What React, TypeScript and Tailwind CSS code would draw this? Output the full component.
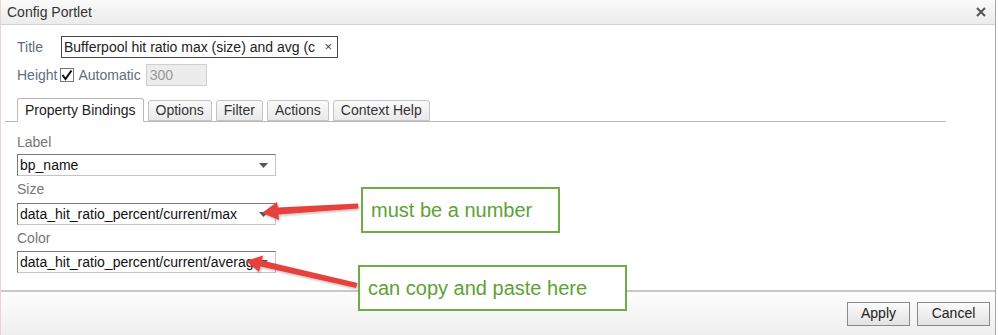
import React from "react";

const font = { fontFamily: '"Liberation Sans", Arial, sans-serif' };

function Select({ value }: { value: string }) {
  return (
    <div className="relative flex h-[22px] w-[259px] items-center overflow-hidden border border-[#c4c4c4] border-t-[#7a7a7a] border-l-[#7a7a7a] bg-white pl-[2px] text-[14px] text-[#111]">
      <span className="whitespace-nowrap">{value}</span>
      <span className="absolute right-0 top-0 flex h-full w-[16px] items-center justify-start bg-white">
        <svg width="9" height="5" viewBox="0 0 9 5">
          <path d="M0 0 L9 0 L4.5 5 Z" fill="#555" />
        </svg>
      </span>
    </div>
  );
}

function Tab({ label, active }: { label: string; active?: boolean }) {
  return (
    <div
      className={
        active
          ? "-mb-px flex h-[24px] items-center rounded-t-[3px] border border-b-white border-[#b8b8b8] bg-white px-[7px] text-[14px] text-[#222]"
          : "flex h-[21px] items-center rounded-t-[3px] border border-[#c4c4c4] bg-gradient-to-b from-[#fafafa] to-[#e9e9e9] px-[7px] text-[14px] text-[#333]"
      }
    >
      {label}
    </div>
  );
}

function Callout({ text, className }: { text: string; className: string }) {
  return (
    <div
      className={`absolute flex items-center border-2 border-[#6fac46] bg-white pl-[8px] text-[20px] text-[#5da234] ${className}`}
    >
      {text}
    </div>
  );
}

export default function App() {
  return (
    <div className="relative h-[335px] w-[998px] overflow-hidden bg-white" style={font}>
      <div className="flex h-[335px] w-[996px] flex-col border-l border-r border-l-[#e8d4d4] border-r-[#a8a8a8]">
        {/* header */}
        <div className="flex h-[25px] shrink-0 items-center justify-between border-b border-[#d2d2d2] bg-gradient-to-b from-[#fafafa] to-[#ececec] pl-[6px] pr-[9px]">
          <span className="text-[14px] text-[#333]">Config Portlet</span>
          <svg width="10" height="10" viewBox="0 0 10 10">
            <path d="M1 1 L9 9 M9 1 L1 9" stroke="#555" strokeWidth="2" />
          </svg>
        </div>

        {/* body */}
        <div className="flex-1">
          <div className="flex items-center pl-[16px] pt-[11px]">
            <span className="w-[44px] text-[14px] text-[#5e6e80]">Title</span>
            <div className="flex h-[22px] w-[277px] items-center justify-between overflow-hidden border border-[#444] pl-[2px] pr-[5px] text-[14px] text-[#222]">
              <span className="whitespace-nowrap">Bufferpool hit ratio max (size) and avg (c</span>
              <span className="ml-[4px] text-[13px] text-[#444]">×</span>
            </div>
          </div>
          <div className="mt-[6px] flex items-center pl-[16px]">
            <span className="text-[14px] text-[#5e6e80]">Height</span>
            <span className="ml-[3px] flex h-[14px] w-[14px] items-center justify-center border border-[#777] bg-white">
              <svg width="12" height="12" viewBox="0 0 12 12">
                <path d="M1.5 6 L4.5 10 L10.5 1.5" stroke="#111" strokeWidth="2" fill="none" />
              </svg>
            </span>
            <span className="ml-[4px] text-[14px] text-[#5e6e80]">Automatic</span>
            <div className="ml-[5px] flex h-[22px] w-[61px] items-center border border-[#cfcfcf] bg-[#ececec] pl-[3px] text-[14px] text-[#999]">
              300
            </div>
          </div>

          {/* tabs */}
          <div className="ml-[4px] mt-[12px] flex w-[941px] items-end gap-[4px] border-b border-[#b8b8b8] pl-[12px]">
            <Tab label="Property Bindings" active />
            <Tab label="Options" />
            <Tab label="Filter" />
            <Tab label="Actions" />
            <Tab label="Context Help" />
          </div>

          <div className="flex flex-col pl-[16px] pt-[12px]">
            <span className="text-[14px] leading-[16px] text-[#777]">Label</span>
            <div className="mt-[4px]">
              <Select value="bp_name" />
            </div>
            <span className="mt-[5px] text-[14px] leading-[16px] text-[#777]">Size</span>
            <div className="mt-[6px]">
              <Select value="data_hit_ratio_percent/current/max" />
            </div>
            <span className="mt-[5px] text-[14px] leading-[16px] text-[#777]">Color</span>
            <div className="mt-[5px]">
              <Select value="data_hit_ratio_percent/current/average" />
            </div>
          </div>
        </div>

        {/* footer */}
        <div className="flex h-[45px] shrink-0 items-center justify-end gap-[7px] border-t-2 border-[#c9c9c9] bg-gradient-to-b from-[#fdfdfd] to-[#efefef] pr-[5px]">
          <button className="h-[24px] w-[63px] border border-[#8a8a8a] bg-gradient-to-b from-[#fbfbfb] to-[#e2e2e2] text-[14px] text-[#222]">
            Apply
          </button>
          <button className="h-[24px] w-[73px] border border-[#8a8a8a] bg-gradient-to-b from-[#fbfbfb] to-[#e2e2e2] text-[14px] text-[#222]">
            Cancel
          </button>
        </div>
      </div>

      {/* annotations */}
      <Callout text="must be a number" className="left-[361px] top-[187px] h-[46px] w-[199px]" />
      <Callout text="can copy and paste here" className="left-[358px] top-[265px] h-[46px] w-[269px]" />
      <svg className="pointer-events-none absolute left-0 top-0" width="998" height="335">
        <defs>
          <filter id="sh" x="-10%" y="-50%" width="120%" height="200%">
            <feDropShadow dx="1" dy="1.5" stdDeviation="1" floodColor="#000" floodOpacity="0.25" />
          </filter>
        </defs>
        <g filter="url(#sh)" fill="#e8413c">
          <path d="M358 203.5 L278 207.5 L277 202 L262 213 L279 220 L278.5 214.5 L358.5 208.5 Z" />
          <path d="M357.5 283 L262 260.5 L263 255.5 L246 261 L259 272 L260.5 266.5 L356 288 Z" />
        </g>
      </svg>
    </div>
  );
}
